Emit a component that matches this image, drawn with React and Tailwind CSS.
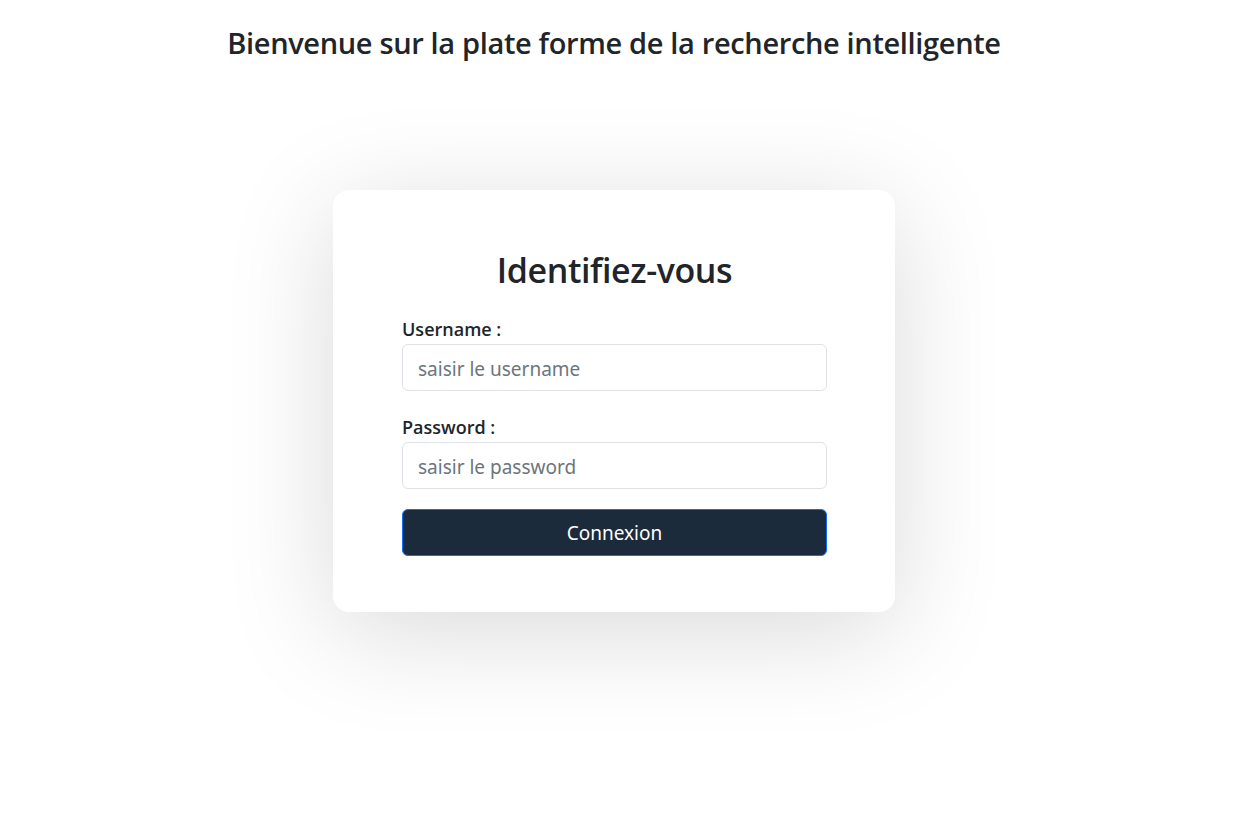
export default function App() {
  return (
    <div className="min-h-[832px] bg-white pr-[19px] text-[#212529]" style={{ fontFamily: '"Open Sans", sans-serif' }}>
      <h3 className="pt-[26px] text-center text-[29px] font-semibold leading-[1.2] tracking-[-0.35px]">
        Bienvenue sur la plate forme de la recherche intelligente
      </h3>

      <div className="mt-[129px] flex justify-center">
        <div className="w-[562px] rounded-[16px] bg-white pl-[69px] pr-[68px] pb-[56px] pt-[60px] shadow-[0_20px_110px_rgba(0,0,0,0.15)]">
          <h2 className="text-center text-[34px] font-semibold leading-[1.2] tracking-[-0.4px]">Identifiez-vous</h2>

          <form className="mt-[25px]" onSubmit={(e) => e.preventDefault()}>
            <label className="block text-[18px] font-semibold leading-[26px]">Username :</label>
            <input
              type="text"
              placeholder="saisir le username"
              className="mt-[2px] block h-[47px] w-full rounded-[6px] border border-[#dee2e6] px-[15px] pt-[3px] text-[19px] outline-none placeholder:text-[#6c757d]"
              style={{ fontFamily: '"Noto Sans", sans-serif' }}
            />

            <label className="mt-[23px] block text-[18px] font-semibold leading-[26px]">Password :</label>
            <input
              type="password"
              placeholder="saisir le password"
              className="mt-[2px] block h-[47px] w-full rounded-[6px] border border-[#dee2e6] px-[15px] pt-[3px] text-[19px] outline-none placeholder:text-[#6c757d]"
              style={{ fontFamily: '"Noto Sans", sans-serif' }}
            />

            <button
              type="submit"
              className="mt-[20px] block h-[47px] w-full rounded-[6px] border border-[#0d6efd] bg-[#1b2b3c] pt-[3px] text-[19px] text-white"
              style={{ fontFamily: '"Noto Sans", sans-serif' }}
            >
              Connexion
            </button>
          </form>
        </div>
      </div>
    </div>
  );
}
